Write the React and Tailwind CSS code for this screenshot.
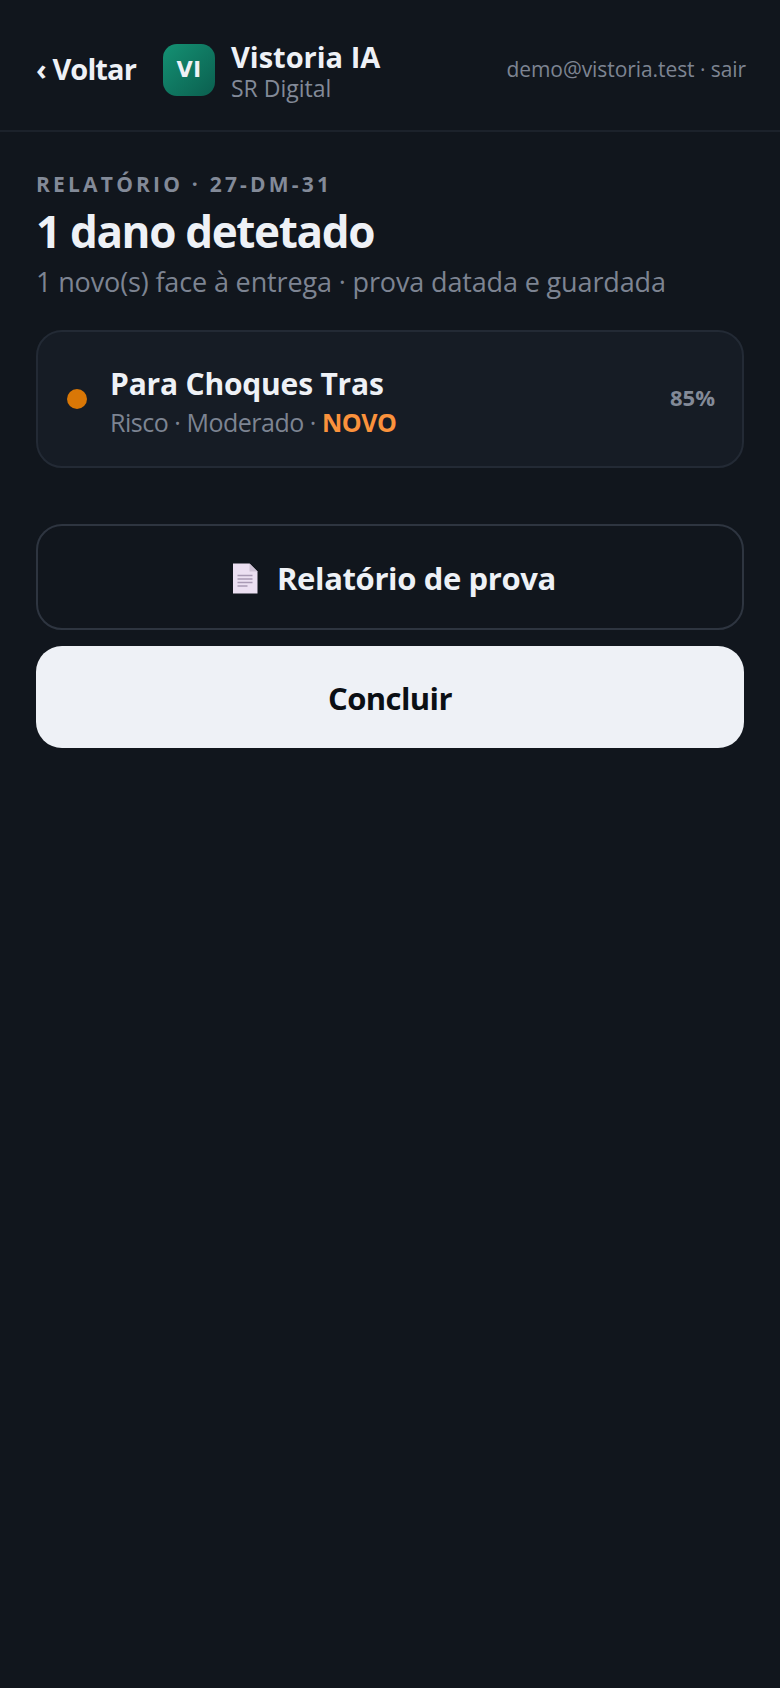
import React from "react";

const DocIcon = () => (
  <svg width="26" height="31" viewBox="0 0 26 31" className="shrink-0">
    <path d="M1 0.5h16.5L25.5 8.5V30.5H1z" fill="#ece0f2" />
    <path d="M17.5 0.5L25.5 8.5H17.5z" fill="#cfc3d6" />
    <path d="M5.5 12.5h15M5.5 16h15M5.5 19.5h15M5.5 23h10" stroke="#a99ab5" strokeWidth="1.3" />
  </svg>
);

export default function App() {
  return (
    <div className="min-h-[1688px] bg-[#11161d] text-[#eef1f6] font-['Open_Sans','Noto_Sans',sans-serif]">
      {/* Header */}
      <header className="h-[132px] pt-[10px] flex items-center justify-between pl-9 pr-[34px] border-b-2 border-[#1c222b]">
        <div className="flex items-center">
          <span className="pb-[4px] text-[29px] font-bold leading-none tracking-[-0.9px]">‹ Voltar</span>
          <div className="ml-[27px] w-[52px] h-[52px] rounded-[14px] bg-gradient-to-br from-[#149173] to-[#0b5f4f] flex items-center justify-center font-['DejaVu_Sans',sans-serif] text-[21px] font-bold leading-none tracking-[0.5px]">
            VI
          </div>
          <div className="ml-[16px]">
            <div className="text-[29px] font-bold leading-[35px]">Vistoria IA</div>
            <div className="mt-[1px] text-[23px] font-medium leading-[26px] text-[#838a98]">SR Digital</div>
          </div>
        </div>
        <div className="text-[21px] text-[#7d8492] tracking-[-0.07px]">demo@vistoria.test · sair</div>
      </header>

      <main className="px-9 pt-[38px]">
        <div className="text-[21px] font-bold leading-[28px] tracking-[3.2px] text-[#838a98]">RELATÓRIO · 27-DM-31</div>
        <h1 className="mt-[5px] text-[44px] font-bold leading-[56px] tracking-[-1.35px]">1 dano detetado</h1>
        <p className="mt-[5px] text-[27px] leading-[36px] text-[#7d8492] tracking-[-0.14px]">1 novo(s) face à entrega · prova datada e guardada</p>

        {/* Damage card */}
        <div className="mt-[30px] h-[138px] flex items-center justify-between pl-[29px] pr-[27px] rounded-[26px] border-2 border-[#232a35] bg-[#161c25]">
          <div className="flex items-center gap-[23px]">
            <span className="w-5 h-5 rounded-full bg-[#d97706]" />
            <div className="pt-[2px]">
              <div className="text-[30px] font-bold leading-[43px] tracking-[-0.2px]">Para Choques Tras</div>
              <div className="text-[25px] leading-[34px] text-[#7d8492] tracking-[-0.48px]">
                Risco · Moderado · <span className="font-bold text-[#fb923c]">NOVO</span>
              </div>
            </div>
          </div>
          <span className="pb-[4px] text-[22px] font-bold text-[#838a98]">85%</span>
        </div>

        {/* Actions */}
        <div className="mt-[56px] flex flex-col gap-[16px]">
          <button className="h-[106px] pl-[8px] pt-[2px] flex items-center justify-center gap-[19px] rounded-[26px] border-2 border-[#2e3540] text-[31px] font-bold tracking-[-0.37px]">
            <DocIcon /> Relatório de prova
          </button>
          <button className="h-[102px] pt-[2px] flex items-center justify-center rounded-[26px] bg-[#eef1f6] text-[#0b0f14] text-[31px] font-bold tracking-[-0.6px]">
            Concluir
          </button>
        </div>
      </main>
    </div>
  );
}
